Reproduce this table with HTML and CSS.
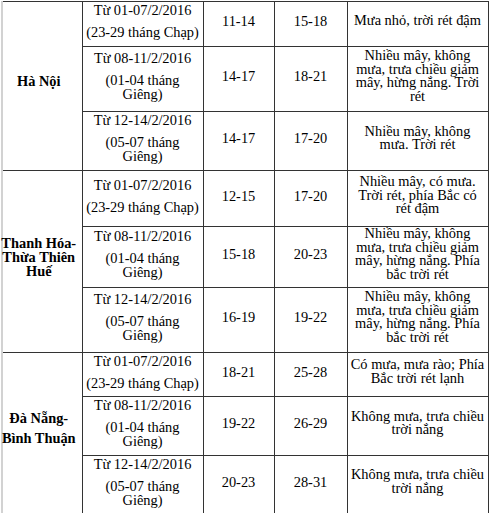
FILE: index.html
```html
<!DOCTYPE html>
<html lang="vi">
<head>
<meta charset="utf-8">
<title>Dự báo thời tiết Tết</title>
<link rel="stylesheet" href="styles.css">
</head>
<body>
<table class="forecast">
  <colgroup>
    <col class="c-region">
    <col class="c-date">
    <col class="c-tmin">
    <col class="c-tmax">
    <col class="c-desc">
  </colgroup>
  <tbody>
    <tr class="h45">
      <td rowspan="3" class="region"><p>Hà Nội</p></td>
      <td class="date"><p>Từ 01-07/2/2016</p><p class="sub">(23-29 tháng Chạp)</p></td>
      <td class="temp">11-14</td>
      <td class="temp">15-18</td>
      <td class="desc"><p>Mưa nhỏ, trời rét đậm</p></td>
    </tr>
    <tr class="h65">
      <td class="date"><p>Từ 08-11/2/2016</p><p class="sub">(01-04 tháng Giêng)</p></td>
      <td class="temp">14-17</td>
      <td class="temp">18-21</td>
      <td class="desc"><p>Nhiều mây, không mưa, trưa chiều giảm mây, hừng nắng. Trời rét</p></td>
    </tr>
    <tr class="h59">
      <td class="date"><p>Từ 12-14/2/2016</p><p class="sub">(05-07 tháng Giêng)</p></td>
      <td class="temp">14-17</td>
      <td class="temp">17-20</td>
      <td class="desc"><p>Nhiều mây, không mưa. Trời rét</p></td>
    </tr>
    <tr class="h56">
      <td rowspan="3" class="region"><p>Thanh Hóa-Thừa Thiên Huế</p></td>
      <td class="date"><p>Từ 01-07/2/2016</p><p class="sub">(23-29 tháng Chạp)</p></td>
      <td class="temp">12-15</td>
      <td class="temp">17-20</td>
      <td class="desc"><p>Nhiều mây, có mưa. Trời rét, phía Bắc có rét đậm</p></td>
    </tr>
    <tr class="h60">
      <td class="date"><p>Từ 08-11/2/2016</p><p class="sub">(01-04 tháng Giêng)</p></td>
      <td class="temp">15-18</td>
      <td class="temp">20-23</td>
      <td class="desc"><p>Nhiều mây, không mưa, trưa chiều giảm mây, hừng nắng. Phía bắc trời rét</p></td>
    </tr>
    <tr class="h65">
      <td class="date"><p>Từ 12-14/2/2016</p><p class="sub">(05-07 tháng Giêng)</p></td>
      <td class="temp">16-19</td>
      <td class="temp">19-22</td>
      <td class="desc"><p>Nhiều mây, không mưa, trưa chiều giảm mây, hừng nắng. Phía bắc trời rét</p></td>
    </tr>
    <tr class="h44">
      <td rowspan="3" class="region"><p>Đà Nẵng-</p><p class="sub2">Bình Thuận</p></td>
      <td class="date"><p>Từ 01-07/2/2016</p><p class="sub">(23-29 tháng Chạp)</p></td>
      <td class="temp">18-21</td>
      <td class="temp">25-28</td>
      <td class="desc"><p>Có mưa, mưa rào; Phía Bắc trời rét lạnh</p></td>
    </tr>
    <tr class="h59">
      <td class="date"><p>Từ 08-11/2/2016</p><p class="sub">(01-04 tháng Giêng)</p></td>
      <td class="temp">19-22</td>
      <td class="temp">26-29</td>
      <td class="desc"><p>Không mưa, trưa chiều trời nắng</p></td>
    </tr>
    <tr class="h58">
      <td class="date"><p>Từ 12-14/2/2016</p><p class="sub">(05-07 tháng Giêng)</p></td>
      <td class="temp">20-23</td>
      <td class="temp">28-31</td>
      <td class="desc"><p>Không mưa, trưa chiều trời nắng</p></td>
    </tr>
  </tbody>
</table>
</body>
</html>
```

FILE: styles.css
```css
html, body {
  margin: 0;
  padding: 0;
  background: #ffffff;
}

body {
  font-family: "Liberation Serif", "Times New Roman", serif;
  font-size: 14.4px;
  color: #000000;
  padding: 1px 0 0 1px;
}

.forecast {
  border-collapse: collapse;
  table-layout: fixed;
  width: 486px;
  font-family: "Liberation Serif", "Times New Roman", serif;
}

.c-region { width: 80px; }
.c-date { width: 121px; }
.c-tmin { width: 71px; }
.c-tmax { width: 73px; }
.c-desc { width: 141px; }

.forecast td {
  border: 1px solid #333333;
  text-align: center;
  vertical-align: middle;
  padding: 0 2px 6px 2px;
  line-height: 14px;
}

.forecast td.region {
  border-left: 2px solid #d2d2d2;
  font-weight: bold;
  padding: 0 0 10px 0;
}

.forecast td.region p {
  margin: 0 4px 0 -3px;
}

.forecast td.desc {
  padding: 0 1.5px 6px 1.5px;
  line-height: 13.5px;
}

.forecast p {
  margin: 0;
}

.forecast p.sub {
  margin-top: 8px;
}

.forecast td.region p.sub2 {
  margin-top: 6px;
}

.h44 { height: 44px; }
.h45 { height: 45px; }
.h56 { height: 56px; }
.h58 { height: 58px; }
.h59 { height: 59px; }
.h60 { height: 60px; }
.h65 { height: 65px; }
```
